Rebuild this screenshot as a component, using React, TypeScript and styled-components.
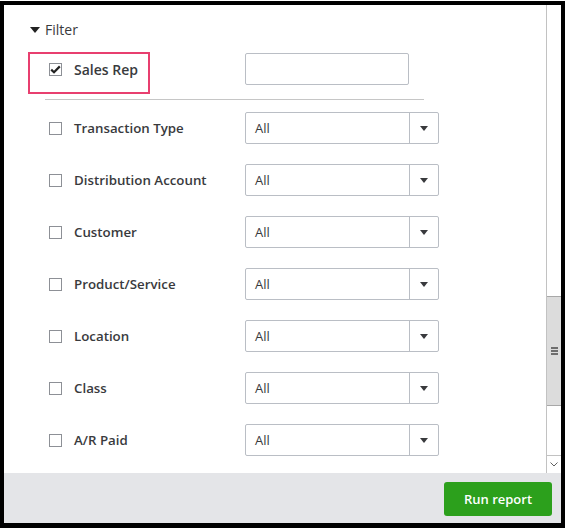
import React, { FC } from 'react'
import styled, { createGlobalStyle } from 'styled-components'

const GlobalStyle = createGlobalStyle`
  html, body {
    margin: 0;
    padding: 0;
    background: #fff;
  }
  body {
    font-family: 'Open Sans', 'Liberation Sans', sans-serif;
    color: #393a3d;
  }
`

const Frame = styled.div`
  box-sizing: border-box;
  margin-top: 1px;
  width: 565px;
  height: 527px;
  border: 4px solid #000;
  border-bottom-width: 5px;
  display: flex;
  flex-direction: column;
  background: #fff;
`

const Body = styled.div`
  flex: 1;
  display: flex;
  min-height: 0;
`

const Content = styled.div`
  position: relative;
  flex: 1;
  overflow: hidden;
  padding: 14px 0 0 26px;
`

const Heading = styled.div`
  display: flex;
  align-items: center;
  gap: 5px;
  height: 20px;
  font-size: 14px;
  color: #393a3d;
  margin-bottom: 14px;
`

const Caret = styled.span`
  width: 0;
  height: 0;
  border-left: 5px solid transparent;
  border-right: 5px solid transparent;
  border-top: 6px solid #222;
  margin-top: 1px;
`

const Row = styled.div`
  display: grid;
  grid-template-columns: 25px 171px auto;
  align-items: center;
  height: 32px;
  padding-left: 19px;
`

const Rows = styled.div`
  display: flex;
  flex-direction: column;
  gap: 20px;
`

const Box = styled.span`
  box-sizing: border-box;
  width: 13px;
  height: 13px;
  border: 1px solid #8d9096;
  background: #fff;
  display: flex;
  align-items: center;
  justify-content: center;
`

const Label = styled.span<{ $large?: boolean }>`
  font-size: ${(p) => (p.$large ? '14px' : '13.3px')};
  font-weight: 600;
  color: #393a3d;
  white-space: nowrap;
`

const TextInput = styled.div`
  box-sizing: border-box;
  width: 164px;
  height: 32px;
  border: 1px solid #babec5;
  border-radius: 2px;
`

const Select = styled.div`
  box-sizing: border-box;
  width: 194px;
  height: 32px;
  border: 1px solid #babec5;
  border-radius: 2px;
  display: flex;
  align-items: stretch;
`

const SelectValue = styled.span`
  flex: 1;
  display: flex;
  align-items: center;
  padding-left: 9px;
  font-size: 13px;
  color: #393a3d;
`

const SelectButton = styled.span`
  width: 28px;
  border-left: 1px solid #babec5;
  display: flex;
  align-items: center;
  justify-content: center;
`

const SmallCaret = styled.span`
  width: 0;
  height: 0;
  border-left: 4px solid transparent;
  border-right: 4px solid transparent;
  border-top: 5px solid #393a3d;
`

const Divider = styled.div`
  width: 379px;
  height: 1px;
  background: #c6c6c6;
  margin: 14px 0 12px 15px;
`

const Highlight = styled.div`
  position: absolute;
  left: 24px;
  top: 47px;
  width: 122px;
  height: 42px;
  box-sizing: border-box;
  border: 2px solid #e83f6f;
  pointer-events: none;
`

const Scrollbar = styled.div`
  width: 15px;
  box-sizing: border-box;
  border-left: 1px solid #c2c2c2;
  display: flex;
  flex-direction: column;
  background: #fff;
`

const Track = styled.div<{ $grow: number }>`
  flex: ${(p) => p.$grow};
`

const Thumb = styled.div`
  height: 110px;
  background: #dcdcdc;
  border-top: 1px solid #a8a8a8;
  border-bottom: 1px solid #a8a8a8;
  box-sizing: border-box;
  display: flex;
  align-items: center;
  justify-content: center;
`

const Grip = styled.div`
  width: 7px;
  display: flex;
  flex-direction: column;
  gap: 1px;
  & > span {
    height: 2px;
    background: #6e6e6e;
  }
`

const ArrowDown = styled.div`
  height: 17px;
  border-top: 1px solid #c2c2c2;
  display: flex;
  align-items: center;
  justify-content: center;
`

const Footer = styled.div`
  height: 50px;
  background: #e4e5e8;
  display: flex;
  align-items: center;
  justify-content: flex-end;
  padding-right: 9px;
`

const RunButton = styled.button`
  width: 108px;
  height: 34px;
  margin-top: 2px;
  background: #2ca01c;
  color: #fff;
  border: none;
  border-radius: 3px;
  font-family: 'Open Sans', 'Liberation Sans', sans-serif;
  font-size: 13px;
  font-weight: 600;
`

const Check = () => (
  <svg width="11" height="9" viewBox="0 0 11 9">
    <path d="M1.2 4.6 L4 7.2 L9.8 1.4" fill="none" stroke="#222" strokeWidth="2.2" />
  </svg>
)

const filters = [
  'Transaction Type',
  'Distribution Account',
  'Customer',
  'Product/Service',
  'Location',
  'Class',
  'A/R Paid',
]

const FilterRow: FC<{ label: string }> = ({ label }) => (
  <Row>
    <Box />
    <Label>{label}</Label>
    <Select>
      <SelectValue>All</SelectValue>
      <SelectButton>
        <SmallCaret />
      </SelectButton>
    </Select>
  </Row>
)

const App: FC = () => {
  return (
    <>
      <GlobalStyle />
      <Frame>
        <Body>
          <Content>
            <Heading>
              <Caret />
              Filter
            </Heading>
            <Row>
              <Box>
                <Check />
              </Box>
              <Label $large>Sales Rep</Label>
              <TextInput />
            </Row>
            <Divider />
            <Rows>
              {filters.map((f) => (
                <FilterRow key={f} label={f} />
              ))}
            </Rows>
            <Highlight />
          </Content>
          <Scrollbar>
            <Track $grow={292} />
            <Thumb>
              <Grip>
                <span />
                <span />
                <span />
              </Grip>
            </Thumb>
            <Track $grow={49} />
            <ArrowDown>
              <svg width="8" height="5" viewBox="0 0 8 5">
                <path d="M0.5 0.5 L4 4 L7.5 0.5" fill="none" stroke="#606060" strokeWidth="1" />
              </svg>
            </ArrowDown>
          </Scrollbar>
        </Body>
        <Footer>
          <RunButton>Run report</RunButton>
        </Footer>
      </Frame>
    </>
  )
}

export default App
